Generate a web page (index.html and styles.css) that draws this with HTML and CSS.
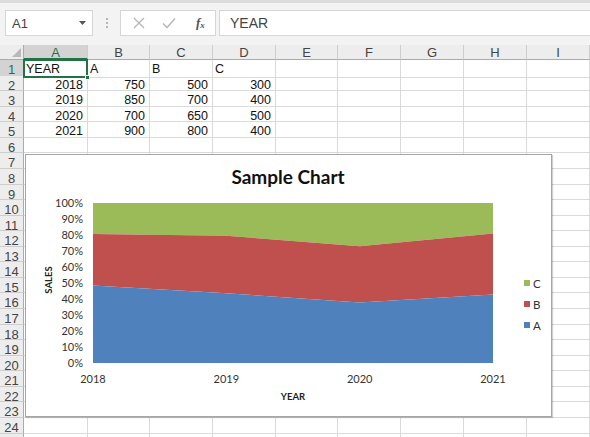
FILE: index.html
```html
<!DOCTYPE html>
<html>
<head>
<meta charset="utf-8">
<link rel="stylesheet" href="styles.css">
</head>
<body>
<div class="app">
  <div class="toolbar">
    <div class="namebox"><span>A1</span><svg class="caret" width="8" height="5" viewBox="0 0 8 5"><path d="M0 0h7L3.5 4z" fill="#555"/></svg></div>
    <svg class="grip" width="4" height="12" viewBox="0 0 4 12"><circle cx="2" cy="2" r="1" fill="#a0a0a0"/><circle cx="2" cy="6" r="1" fill="#a0a0a0"/><circle cx="2" cy="10" r="1" fill="#a0a0a0"/></svg>
    <div class="fxbtns">
      <svg width="12" height="12" viewBox="0 0 12 12"><path d="M1 1l10 10M11 1L1 11" stroke="#b5b5b5" stroke-width="1.3" fill="none"/></svg>
      <svg width="14" height="12" viewBox="0 0 14 12"><path d="M1 6.5l4 4L13 1.5" stroke="#b5b5b5" stroke-width="1.4" fill="none"/></svg>
      <span class="fx">f<sub>x</sub></span>
    </div>
    <div class="formula">YEAR</div>
  </div>
  <div class="sheet">
    <div class="row hdr"><div class="corner"><svg width="9" height="9" viewBox="0 0 9 9"><path d="M9 0V9H0z" fill="#b9b9b9"/></svg></div><div class="csel">A</div><div>B</div><div>C</div><div>D</div><div>E</div><div>F</div><div>G</div><div>H</div><div>I</div></div>
    <div class="row"><div class="rh rsel">1</div><div class="active">YEAR</div><div>A</div><div>B</div><div>C</div><div></div><div></div><div></div><div></div><div></div></div>
    <div class="row"><div class="rh">2</div><div class="n">2018</div><div class="n">750</div><div class="n">500</div><div class="n">300</div><div></div><div></div><div></div><div></div><div></div></div>
    <div class="row"><div class="rh">3</div><div class="n">2019</div><div class="n">850</div><div class="n">700</div><div class="n">400</div><div></div><div></div><div></div><div></div><div></div></div>
    <div class="row"><div class="rh">4</div><div class="n">2020</div><div class="n">700</div><div class="n">650</div><div class="n">500</div><div></div><div></div><div></div><div></div><div></div></div>
    <div class="row"><div class="rh">5</div><div class="n">2021</div><div class="n">900</div><div class="n">800</div><div class="n">400</div><div></div><div></div><div></div><div></div><div></div></div>
    <div class="row"><div class="rh">6</div><div></div><div></div><div></div><div></div><div></div><div></div><div></div><div></div><div></div></div>
    <div class="row"><div class="rh">7</div><div></div><div></div><div></div><div></div><div></div><div></div><div></div><div></div><div></div></div>
    <div class="row"><div class="rh">8</div><div></div><div></div><div></div><div></div><div></div><div></div><div></div><div></div><div></div></div>
    <div class="row"><div class="rh">9</div><div></div><div></div><div></div><div></div><div></div><div></div><div></div><div></div><div></div></div>
    <div class="row"><div class="rh">10</div><div></div><div></div><div></div><div></div><div></div><div></div><div></div><div></div><div></div></div>
    <div class="row"><div class="rh">11</div><div></div><div></div><div></div><div></div><div></div><div></div><div></div><div></div><div></div></div>
    <div class="row"><div class="rh">12</div><div></div><div></div><div></div><div></div><div></div><div></div><div></div><div></div><div></div></div>
    <div class="row"><div class="rh">13</div><div></div><div></div><div></div><div></div><div></div><div></div><div></div><div></div><div></div></div>
    <div class="row"><div class="rh">14</div><div></div><div></div><div></div><div></div><div></div><div></div><div></div><div></div><div></div></div>
    <div class="row"><div class="rh">15</div><div></div><div></div><div></div><div></div><div></div><div></div><div></div><div></div><div></div></div>
    <div class="row"><div class="rh">16</div><div></div><div></div><div></div><div></div><div></div><div></div><div></div><div></div><div></div></div>
    <div class="row"><div class="rh">17</div><div></div><div></div><div></div><div></div><div></div><div></div><div></div><div></div><div></div></div>
    <div class="row"><div class="rh">18</div><div></div><div></div><div></div><div></div><div></div><div></div><div></div><div></div><div></div></div>
    <div class="row"><div class="rh">19</div><div></div><div></div><div></div><div></div><div></div><div></div><div></div><div></div><div></div></div>
    <div class="row"><div class="rh">20</div><div></div><div></div><div></div><div></div><div></div><div></div><div></div><div></div><div></div></div>
    <div class="row"><div class="rh">21</div><div></div><div></div><div></div><div></div><div></div><div></div><div></div><div></div><div></div></div>
    <div class="row"><div class="rh">22</div><div></div><div></div><div></div><div></div><div></div><div></div><div></div><div></div><div></div></div>
    <div class="row"><div class="rh">23</div><div></div><div></div><div></div><div></div><div></div><div></div><div></div><div></div><div></div></div>
    <div class="row"><div class="rh">24</div><div></div><div></div><div></div><div></div><div></div><div></div><div></div><div></div><div></div></div>
    <div class="row"><div class="rh"></div><div></div><div></div><div></div><div></div><div></div><div></div><div></div><div></div><div></div></div>

    <div class="chart">
      <svg width="527" height="263" viewBox="25 154 527 263">
        <polygon fill="#9bbb59" points="93,203 493,203 493,233.5 359.7,246.2 226.3,235.8 93,234"/>
        <polygon fill="#c0504d" points="93,234 226.3,235.8 359.7,246.2 493,233.5 493,294.4 359.7,302.5 226.3,293.3 93,285.6"/>
        <polygon fill="#4f81bd" points="93,285.6 226.3,293.3 359.7,302.5 493,294.4 493,363 93,363"/>
        <text class="title" x="288" y="184" text-anchor="middle">Sample Chart</text>
        <g class="ax" text-anchor="end">
          <text x="83" y="207">100%</text>
          <text x="83" y="223">90%</text>
          <text x="83" y="239">80%</text>
          <text x="83" y="255">70%</text>
          <text x="83" y="271">60%</text>
          <text x="83" y="287">50%</text>
          <text x="83" y="303">40%</text>
          <text x="83" y="319">30%</text>
          <text x="83" y="335">20%</text>
          <text x="83" y="351">10%</text>
          <text x="83" y="367">0%</text>
        </g>
        <g class="ax" text-anchor="middle">
          <text x="93" y="383">2018</text>
          <text x="226.3" y="383">2019</text>
          <text x="359.7" y="383">2020</text>
          <text x="493" y="383">2021</text>
        </g>
        <text class="atitle" x="293" y="399.5" text-anchor="middle">YEAR</text>
        <text class="atitle" transform="translate(51.5 280) rotate(-90)" text-anchor="middle">SALES</text>
        <rect x="524" y="280" width="6" height="6" fill="#9bbb59"/>
        <rect x="524" y="301" width="6" height="6" fill="#c0504d"/>
        <rect x="524" y="322" width="6" height="6" fill="#4f81bd"/>
        <g class="leg">
          <text x="533" y="287.5">C</text>
          <text x="533" y="308.5">B</text>
          <text x="533" y="329.5">A</text>
        </g>
      </svg>
    </div>
  </div>
</div>
</body>
</html>
```
FILE: styles.css
```css
html, body {
  margin: 0;
  padding: 0;
  background: #fff;
  overflow: hidden;
}
.app {
  width: 590px;
  height: 437px;
  overflow: hidden;
  font-family: "Liberation Sans", Arial, sans-serif;
}
.toolbar {
  height: 45px;
  box-sizing: border-box;
  background: #f3f3f3;
  border-top: 3px solid #dcdcdc;
  display: flex;
  align-items: flex-start;
  padding-top: 7px;
  padding-left: 5px;
}
.namebox {
  width: 88px;
  height: 26px;
  box-sizing: border-box;
  background: #fff;
  border: 1px solid #d6d6d6;
  display: flex;
  align-items: center;
  justify-content: space-between;
  padding: 0 5px 0 6px;
  font-size: 13px;
  color: #444;
}
.caret {
  display: block;
}
.grip {
  display: block;
  margin: 7px 0 0 12px;
}
.fxbtns {
  margin-left: 11px;
  width: 96px;
  height: 26px;
  box-sizing: border-box;
  background: #fff;
  border: 1px solid #d6d6d6;
  display: flex;
  align-items: center;
  gap: 17px;
  padding-left: 12px;
}
.fxbtns svg {
  display: block;
}
.fx {
  font-family: "Liberation Serif", serif;
  font-style: italic;
  font-weight: bold;
  font-size: 13px;
  color: #555;
  margin-left: 3px;
}
.fx sub {
  font-size: 9px;
  vertical-align: -1px;
}
.formula {
  margin-left: 3px;
  flex: 1;
  height: 26px;
  box-sizing: border-box;
  background: #fff;
  border: 1px solid #d6d6d6;
  border-right: 0;
  padding-left: 10px;
  font-size: 14px;
  line-height: 24px;
  color: #444;
}
.sheet {
  position: relative;
}
.row {
  display: grid;
  grid-template-columns: 24px 64px 62px 63px 63px 62px 63px 63px 63px 63px;
  height: 15.57px;
}
.row > div {
  box-sizing: border-box;
  border-right: 1px solid #dadada;
  border-bottom: 1px solid #dadada;
  font-size: 12.5px;
  line-height: 15px;
  color: #111;
  padding: 2px 2px 0;
  white-space: nowrap;
  overflow: hidden;
}
.row > div.n {
  text-align: right;
  padding-right: 4px;
}
.row.hdr {
  height: 15px;
}
.row.hdr > div {
  background: #ededed;
  border-right: 1px solid #cdcdcd;
  border-bottom: 1px solid #ababab;
  text-align: center;
  font-size: 13px;
  color: #444;
  line-height: 15px;
  padding: 0;
}
.row.hdr > div.corner {
  display: flex;
  align-items: flex-end;
  justify-content: flex-end;
  padding: 0 2px 2px 0;
  border-right: 1px solid #ababab;
}
.corner svg {
  display: block;
}
.row.hdr > div.csel {
  background: #d3d3d3;
  color: #217346;
  border-bottom: 2px solid #217346;
}
.row > div.rh {
  background: #ededed;
  border-right: 1px solid #ababab;
  border-bottom: 1px solid #cdcdcd;
  text-align: center;
  font-size: 13px;
  color: #444;
  padding: 2px 0 0;
}
.row > div.rsel {
  background: #d3d3d3;
  color: #217346;
}
.row > div.active {
  position: relative;
  overflow: visible;
}
.active::after {
  content: "";
  position: absolute;
  left: -1px;
  top: -1px;
  right: -1px;
  bottom: -1px;
  border: 2px solid #217346;
}
.active::before {
  content: "";
  position: absolute;
  right: -3px;
  bottom: -3px;
  width: 5px;
  height: 5px;
  background: #217346;
  border: 1px solid #fff;
  box-sizing: border-box;
  z-index: 2;
}
.chart {
  position: absolute;
  left: 25px;
  top: 109px;
  width: 527px;
  height: 263px;
  box-sizing: border-box;
  background: #fff;
  border: 1px solid #a6a6a6;
  box-shadow: 1px 1px 1px rgba(0, 0, 0, 0.18);
  overflow: hidden;
}
.chart svg {
  display: block;
  margin: -1px 0 0 -1px;
}
.title {
  font-family: Lato, "Open Sans", sans-serif;
  font-weight: bold;
  font-size: 19px;
  fill: #111;
}
.ax {
  font-family: Lato, "Open Sans", sans-serif;
  font-size: 11px;
  fill: #333;
}
.atitle {
  font-family: Lato, "Open Sans", sans-serif;
  font-weight: bold;
  font-size: 9.5px;
  fill: #222;
}
.leg {
  font-family: Lato, "Open Sans", sans-serif;
  font-size: 11.5px;
  fill: #333;
}
```
